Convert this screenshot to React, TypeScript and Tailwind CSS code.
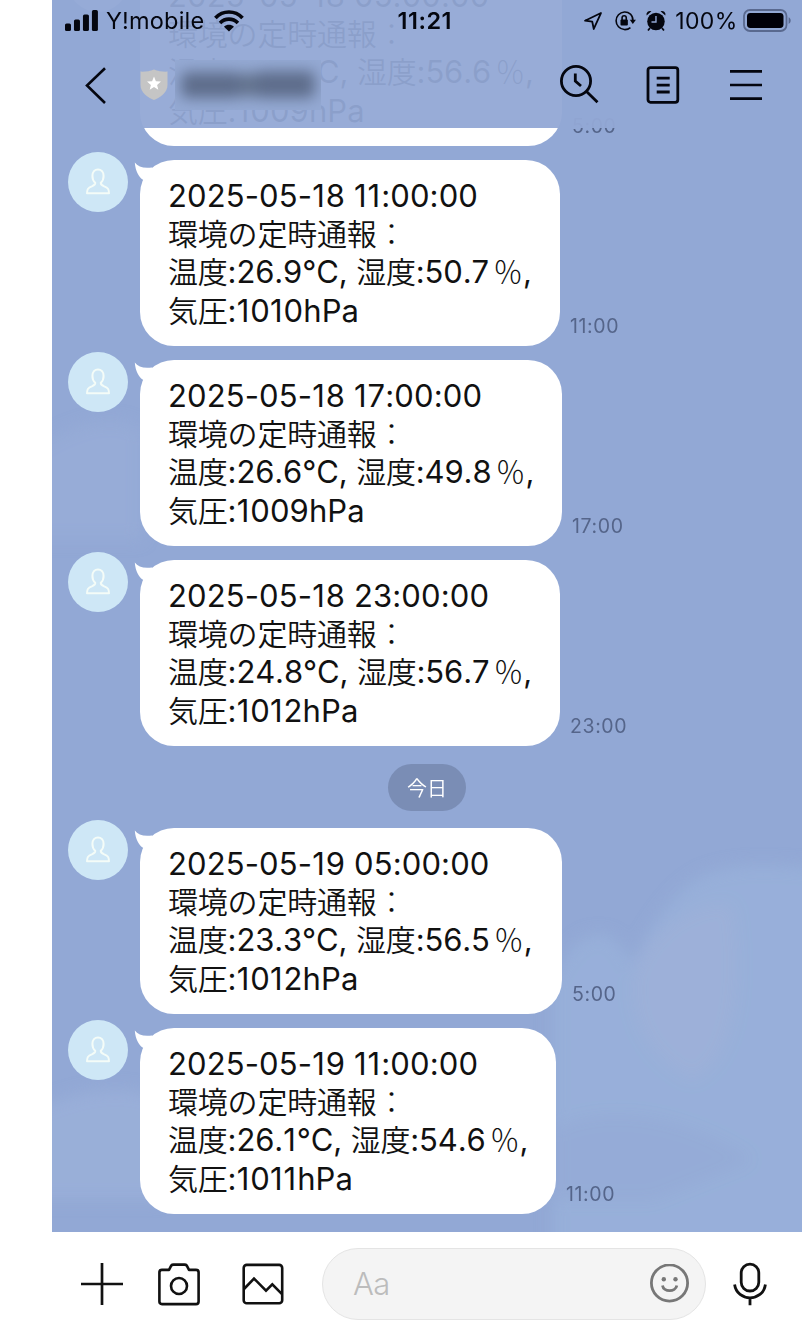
import React from "react";

const LATIN = "font-['Inter','Liberation_Sans','Noto_Sans_CJK_JP',sans-serif]";
const CJK = "font-['Noto_Sans_CJK_JP',sans-serif] font-[350] text-[30px] tracking-[-0.2px]";

type Message = {
  stamp: string;
  temp: string;
  humidity: string;
  pressure: string;
  time: string;
  width: string;
};

const yesterday: Message[] = [
  { stamp: "2025-05-18 05:00:00", temp: "24.6", humidity: "56.6", pressure: "1009", time: "5:00", width: "w-[422px]" },
  { stamp: "2025-05-18 11:00:00", temp: "26.9", humidity: "50.7", pressure: "1010", time: "11:00", width: "w-[420px]" },
  { stamp: "2025-05-18 17:00:00", temp: "26.6", humidity: "49.8", pressure: "1009", time: "17:00", width: "w-[422px]" },
  { stamp: "2025-05-18 23:00:00", temp: "24.8", humidity: "56.7", pressure: "1012", time: "23:00", width: "w-[420px]" },
];

const today: Message[] = [
  { stamp: "2025-05-19 05:00:00", temp: "23.3", humidity: "56.5", pressure: "1012", time: "5:00", width: "w-[422px]" },
  { stamp: "2025-05-19 11:00:00", temp: "26.1", humidity: "54.6", pressure: "1011", time: "11:00", width: "w-[416px]" },
];

/* Gives the narrow digit 1 a little more room than its neighbours. */
function Digits({ text }: { text: string }) {
  return (
    <>
      {text.split(/(1)/).map((part, i) =>
        part === "1" ? (
          <span key={i} className="tracking-[1px]">
            1
          </span>
        ) : (
          part
        ),
      )}
    </>
  );
}

function Avatar() {
  return (
    <div className="flex size-[60px] shrink-0 items-center justify-center rounded-full bg-[#cee7f6]">
      <svg className="size-[60px]" viewBox="0 0 60 60" fill="none" stroke="#f4fcf8" strokeWidth="2" strokeLinejoin="round">
        <path d="M27.2 30.7C25.4 29.2 24.4 26.6 24.4 23.9C24.4 20 26.8 17.4 30 17.4C33.2 17.4 35.6 20 35.6 23.9C35.6 26.6 34.6 29.2 32.8 30.7C32.5 32.6 33.6 33.3 36.2 34.4C39.8 35.8 41 37 41 41.3H19C19 37 20.2 35.8 23.8 34.4C26.4 33.3 27.5 32.6 27.2 30.7Z" />
      </svg>
    </div>
  );
}

function MessageRow({ m }: { m: Message }) {
  return (
    <div className="flex h-[194px] shrink-0 items-start pl-4">
      <Avatar />
      <div className={`relative ml-3 mt-2 h-[186px] shrink-0 rounded-[34px] bg-white pl-[28px] pt-[17px] text-[#111] ${m.width}`}>
        <svg className="absolute -left-[6px] top-[2px] h-[26px] w-[40px]" viewBox="0 0 40 26" fill="#fff">
          <path d="M0.8 0.4C4 4.8 10 6.8 18 5.4L26 10L16 22L8.6 17.5C4.9 14.7 1.4 9 0.8 0.4Z" />
        </svg>
        <div className="whitespace-nowrap text-[31px] [font-kerning:none]">
          <p className="h-[36px] leading-[38px] tracking-[0.13px]">
            <Digits text={m.stamp} />
          </p>
          <p className={`h-[38.4px] leading-[38.4px] ${CJK}`}>
            環境の定時通報<span className="font-light">：</span>
          </p>
          <p className="h-[38.4px] leading-[38.4px] tracking-[-0.12px]">
            <span className={CJK}>温度</span>:<Digits text={m.temp} />
            °C, <span className={CJK}>湿度</span>:<Digits text={m.humidity} />
            <span className="ml-[4px] font-['Noto_Sans_CJK_JP',sans-serif] text-[30px] font-light">％</span>,
          </p>
          <p className="h-[38.4px] leading-[38.4px] tracking-[0.1px]">
            <span className={CJK}>気圧</span>:<Digits text={m.pressure} />
            hPa
          </p>
        </div>
      </div>
      <span className="ml-[10px] mt-[162px] text-[19.5px] leading-[24px] tracking-[0.6px] text-[#55658a]">{m.time}</span>
    </div>
  );
}

function StatusBar() {
  return (
    <div className="flex h-[41px] items-center pl-[13px] pr-[10px] text-[#04060f]">
      <svg className="h-[22px] w-[34px]" viewBox="0 0 34 22" fill="currentColor">
        <rect x="0" y="13.5" width="6" height="7.5" rx="1.6" />
        <rect x="9" y="9.5" width="6" height="11.5" rx="1.6" />
        <rect x="18" y="4.5" width="6" height="16.5" rx="1.6" />
        <rect x="27" y="0" width="6" height="21" rx="1.6" />
      </svg>
      <span className="ml-[7px] w-[99px] whitespace-nowrap text-[23.5px] tracking-[0.2px]">Y!mobile</span>
      <svg className="ml-[8px] h-[22px] w-[32px]" viewBox="0 0 32 22" fill="none" stroke="currentColor" strokeWidth="3.7">
        <path d="M2.4 7.9C10 0 22 0 29.6 7.9" />
        <path d="M7 13C12.2 7.9 19.8 7.9 25 13" />
        <path d="M11 16.8C14 14.2 18 14.2 21 16.8L16 21.6Z" fill="currentColor" stroke="none" />
      </svg>
      <span className="ml-[153px] w-[60px] whitespace-nowrap pt-px text-[23.5px] font-semibold tracking-[0.5px]">11:21</span>
      <svg className="ml-[126px] h-[20px] w-[20px]" viewBox="0 0 20 20" fill="none" stroke="currentColor" strokeWidth="1.8" strokeLinejoin="round">
        <path d="M18 2L10.8 18L9.3 10.7L2 9.7Z" />
      </svg>
      <svg className="ml-[11px] h-[22px] w-[22px]" viewBox="0 0 22 22" fill="none" stroke="currentColor" strokeWidth="1.6">
        <path d="M16.5 4A8.8 8.8 0 1 0 16.5 17.6M16.5 4A8.8 8.8 0 0 1 18.9 11" />
        <path d="M15.8 9.8H22L18.9 14Z" fill="currentColor" stroke="none" />
        <rect x="6.5" y="9.6" width="7.4" height="5.8" rx="1" fill="currentColor" stroke="none" />
        <path d="M8.1 10V7.8a2.1 2.1 0 0 1 4.2 0V10" />
      </svg>
      <svg className="ml-[9px] h-[22px] w-[22px]" viewBox="0 0 22 22" fill="currentColor">
        <circle cx="11" cy="11.5" r="8.8" />
        <path d="M1.6 5.5A3.6 3.6 0 0 1 6.5 1.2ZM20.4 5.5A3.6 3.6 0 0 0 15.5 1.2Z" />
        <path d="M5 18L3 20.5M17 18L19 20.5" stroke="currentColor" strokeWidth="1.8" />
        <path d="M11 6V12H6.5" fill="none" stroke="#92a8d5" strokeWidth="1.4" />
      </svg>
      <span className="ml-[8px] w-[63px] whitespace-nowrap pt-px text-[23px] tracking-[0.4px]">100%</span>
      <svg className="ml-[5px] h-[24px] w-[49px] shrink-0" viewBox="0 0 49 24" fill="none">
        <rect x="1" y="1" width="42.5" height="21" rx="6" stroke="#59698f" strokeWidth="1.8" />
        <rect x="4" y="4" width="36.5" height="15" rx="3.4" fill="#000008" />
        <path d="M45.6 8.3C48.4 9.6 48.4 13.6 45.6 14.9Z" fill="#59698f" />
      </svg>
    </div>
  );
}

function Header() {
  return (
    <header className="absolute inset-x-0 top-0 h-[128px] bg-[#92a8d5]/95">
      <StatusBar />
      <div className="flex h-[87px] items-center text-[#04060f]">
        <svg className="ml-[32px] h-[38px] w-[24px]" viewBox="0 0 24 38" fill="none" stroke="currentColor" strokeWidth="2.6">
          <path d="M21 2.2L3 19.5L21 37" />
        </svg>
        <svg className="ml-[32px] h-[32px] w-[28px]" viewBox="0 0 28 32">
          <path d="M14 .5C18 2.2 23 2.8 27.5 2.6V16C27.5 23.5 20 28.5 14 31C8 28.5 .5 23.5 .5 16V2.6C5 2.8 10 2.2 14 .5Z" fill="#c5c5c5" />
          <path d="M14 7.5L15.9 12.3L21 12.6L17.1 15.9L18.3 20.8L14 18.1L9.7 20.8L10.9 15.9L7 12.6L12.1 12.3Z" fill="#fff" />
        </svg>
        <div className="ml-[7px] flex h-[50px] w-[146px] items-center justify-center overflow-hidden bg-[#94a9d3]">
          <div className="flex items-center blur-[7px]">
            <div className="h-[26px] w-[60px] rounded-[6px] bg-[#5e6d8b]" />
            <div className="h-[24px] w-[14px] bg-[#65758f]" />
            <div className="h-[27px] w-[60px] rounded-[6px] bg-[#5e6d8b]" />
          </div>
        </div>
        <svg className="ml-[238px] h-[40px] w-[40px]" viewBox="0 0 40 40" fill="none" stroke="currentColor" strokeWidth="2.8">
          <circle cx="17" cy="16" r="14.6" />
          <path d="M27.5 26.5L38.5 37.2M16.3 8.5V16L22 21" />
        </svg>
        <svg className="ml-[46px] h-[40px] w-[36px]" viewBox="0 0 36 40" fill="none" stroke="currentColor" strokeWidth="2.8">
          <rect x="3" y="2.6" width="29.8" height="34.7" rx="2.5" />
          <path d="M11.7 13.2H24.7M11.7 20.1H24.7M11.7 27H24.7" />
        </svg>
        <svg className="ml-[48px] h-[34px] w-[34px]" viewBox="0 0 34 34" fill="none" stroke="currentColor" strokeWidth="2.6">
          <path d="M1 3.4H33M1 17H33M1 30.6H33" />
        </svg>
      </div>
    </header>
  );
}

function Composer() {
  return (
    <footer className="flex h-[102px] items-center bg-white pt-[2px] text-[#111]">
      <svg className="ml-[28px] h-[44px] w-[44px]" viewBox="0 0 44 44" fill="none" stroke="currentColor" strokeWidth="2.7">
        <path d="M22 1V43M1 22H43" />
      </svg>
      <svg className="ml-[33px] h-[44px] w-[44px]" viewBox="0 0 44 44" fill="none" stroke="currentColor" strokeWidth="2.6" strokeLinejoin="round">
        <path d="M5 7.9H12L14.2 3.6Q15 2.6 16.5 2.6H27.5Q29 2.6 29.8 3.6L32 7.9H39Q41.6 7.9 41.6 10.5V39.5Q41.6 42.1 39 42.1H5Q2.4 42.1 2.4 39.5V10.5Q2.4 7.9 5 7.9Z" />
        <circle cx="22" cy="24" r="8" />
      </svg>
      <svg className="ml-[40px] h-[44px] w-[44px]" viewBox="0 0 44 44" fill="none" stroke="currentColor" strokeWidth="2.6">
        <rect x="2.7" y="2.9" width="38.5" height="38.4" rx="3" />
        <path d="M3 27L13 16.5L25 28.7L31.3 22.4L41 32.2" />
      </svg>
      <div className="ml-[37px] flex h-[72px] w-[384px] items-center rounded-full border border-[#e4e4e4] bg-[#f4f4f4] pl-[30px] pr-[15px]">
        <span className="flex-1 text-[31px] font-light tracking-[-0.5px] text-[#bcbcbc]">Aa</span>
        <svg className="h-[40px] w-[40px]" viewBox="0 0 40 40" fill="none" stroke="#777" strokeWidth="2.8">
          <circle cx="19.5" cy="19" r="18.1" />
          <circle cx="13.8" cy="15.3" r="2.2" fill="#777" stroke="none" />
          <circle cx="25.5" cy="15.3" r="2.2" fill="#777" stroke="none" />
          <path d="M12.5 21.5C13.5 28.4 25.7 28.4 26.8 21.5" />
        </svg>
      </div>
      <svg className="ml-[27px] h-[44px] w-[36px]" viewBox="0 0 36 44" fill="none" stroke="currentColor" strokeWidth="2.8">
        <rect x="8.2" y="2.2" width="17.6" height="26.8" rx="8.8" />
        <path d="M1.6 22.5C4 40.2 30 40.2 32.4 22.5M17 35.5V43.2" />
      </svg>
    </footer>
  );
}

function Clouds() {
  return (
    <svg className="absolute inset-0 h-full w-full" viewBox="0 0 750 1232" preserveAspectRatio="none">
      <defs>
        <filter id="soft" x="-20%" y="-20%" width="140%" height="140%">
          <feGaussianBlur stdDeviation="8" />
        </filter>
      </defs>
      <g filter="url(#soft)">
        <path d="M500 980C520 930 560 915 580 965C600 920 630 880 660 872C690 862 730 865 780 870V1260H500Z" fill="#9ab1db" opacity=".75" />
        <path d="M585 960C610 920 650 900 680 905C690 960 690 1060 640 1080C600 1060 570 1020 585 960Z" fill="#a0b0d9" opacity=".6" />
        <path d="M500 1130C560 1100 640 1120 700 1160L600 1200H500Z" fill="#93a8d6" opacity=".6" />
        <path d="M-20 450C20 425 60 410 90 430V540H-20Z" fill="#9bb0d9" opacity=".5" />
        <path d="M-20 1110C30 1090 70 1080 110 1100V1200H-20Z" fill="#9db2da" opacity=".65" />
      </g>
    </svg>
  );
}

export default function App() {
  return (
    <div className={`h-[1334px] w-[802px] overflow-hidden bg-white pl-[52px] ${LATIN}`}>
      <main className="relative h-[1232px] overflow-hidden bg-[#92a8d5]">
        <Clouds />
        <div className="relative flex h-full flex-col justify-end gap-[6px] pb-[18px]">
          {yesterday.map((m) => (
            <MessageRow key={m.stamp} m={m} />
          ))}
          <div className="mb-[3px] mt-[12px] flex h-[47px] w-[78px] shrink-0 items-center justify-center self-center rounded-full bg-[#7a8db5] font-['Noto_Sans_CJK_JP',sans-serif] text-[20px] font-[350] text-white">
            今日
          </div>
          {today.map((m) => (
            <MessageRow key={m.stamp} m={m} />
          ))}
        </div>
        <Header />
      </main>
      <Composer />
    </div>
  );
}
